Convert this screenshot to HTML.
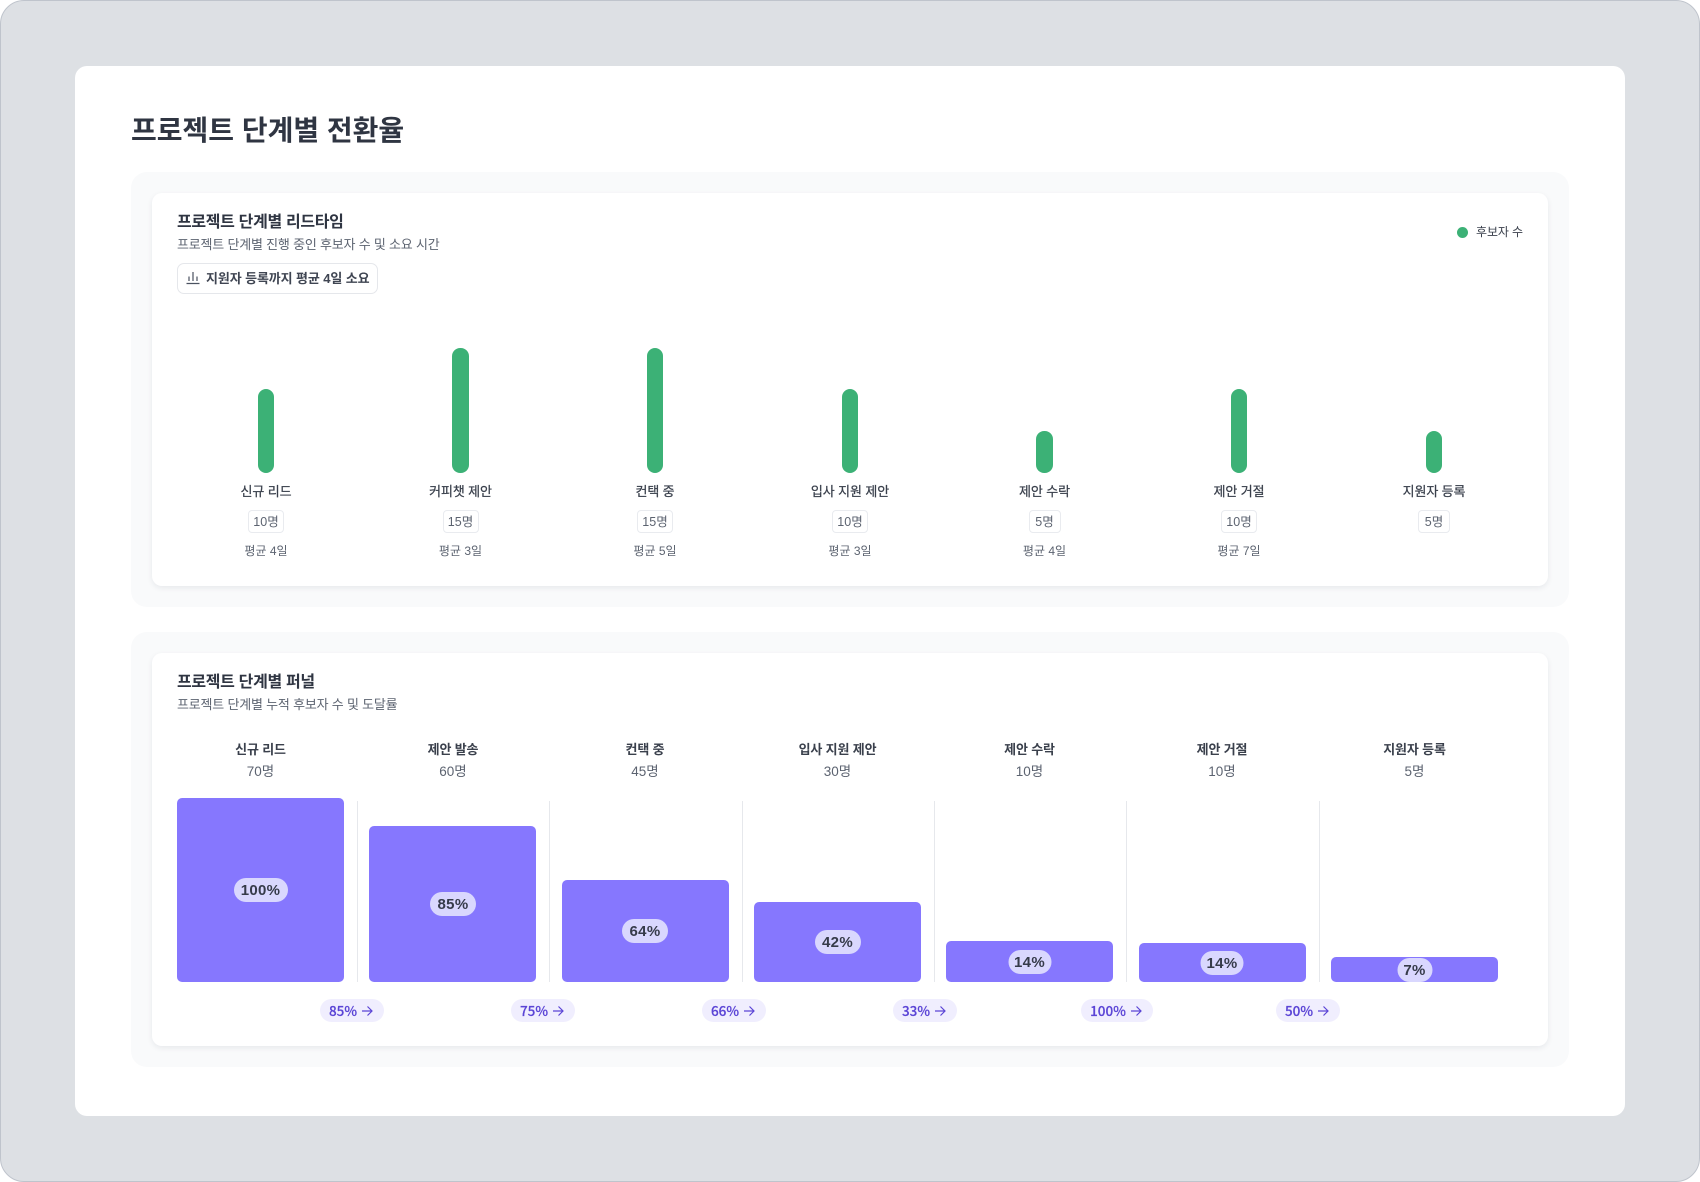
<!DOCTYPE html>
<html lang="ko"><head><meta charset="utf-8"><title>프로젝트 단계별 전환율</title>
<style>
*{box-sizing:border-box}
html,body{margin:0;padding:0;background:#fff}
body{width:1700px;height:1182px;position:relative;overflow:hidden;font-family:"Liberation Sans","Noto Sans CJK KR",sans-serif;color:#2f3542}
.a{position:absolute}
.frame{left:0;top:0;width:1700px;height:1182px;background:#dde0e4;border:1px solid #bfc4cc;border-radius:24px}
.card{left:75px;top:66px;width:1550px;height:1050px;background:#fff;border-radius:12px}
.panel{left:131px;width:1438px;background:#f9fafb;border-radius:16px}
.inner{left:152px;width:1396px;background:#fff;border-radius:10px;box-shadow:0 2px 6px rgba(30,40,60,.08)}
.t{position:absolute;white-space:nowrap;line-height:20px;height:20px}
.c{transform:translateX(-50%);text-align:center}
h1{margin:0;position:absolute;left:131px;top:109px;font-size:28px;line-height:44px;font-weight:700;color:#2f3542;white-space:nowrap}
.h2{font-size:16px;font-weight:700;color:#2f3542;letter-spacing:-.33px}
.sub{font-size:13px;color:#5c6370;letter-spacing:-.2px}
.btn{left:177px;top:263px;width:201px;height:31px;border:1px solid #e5e7eb;border-radius:7px;background:#fff}
.lb{font-size:13px;font-weight:400;color:#3a404c;letter-spacing:-.1px;-webkit-text-stroke:.25px #3a404c}
.fh{font-weight:700;-webkit-text-stroke:0;letter-spacing:-.15px}
.bar{width:16.4px;background:#3cb176;border-radius:8.2px}
.cnt{height:23px;border:1px solid #e9ebef;border-radius:4px;background:#fff;font-size:12.5px;line-height:22px;text-align:center;color:#5c6370;transform:translateX(-50%)}
.av{font-size:12px;color:#5c6370}
.fc{font-size:13.5px}
.f{width:167px;background:#8677fe;border-radius:5px;bottom:200px}
.dv{width:1px;top:801px;height:181px;background:#e6e8ec}
.p{height:24px;background:#d9d7fe;border-radius:12px;font-size:15px;letter-spacing:.3px;font-weight:700;line-height:25px;text-align:center;color:#363b4a;transform:translate(-50%,-50%)}
.r{top:999px;height:23px;background:#f0eefe;border-radius:12px;color:#5b45d6;font-family:"Noto Sans CJK KR","Liberation Sans",sans-serif;font-size:13.5px;font-weight:500;line-height:23px;display:flex;align-items:center;justify-content:center;gap:4px;padding-right:2px;transform:translateX(-50%);-webkit-text-stroke:.2px #5b45d6}
.r svg{display:block}
</style></head><body>
<div class="a frame"></div>
<div class="a card"></div>
<h1>프로젝트 단계별 전환율</h1>

<div class="a panel" style="top:172px;height:435px"></div>
<div class="a inner" style="top:193px;height:393px"></div>
<div class="t h2" style="left:177px;top:212.500px">프로젝트 단계별 리드타임</div>
<div class="t sub" style="left:177px;top:235px">프로젝트 단계별 진행 중인 후보자 수 및 소요 시간</div>
<div class="a btn"></div>
<svg class="a" style="left:186px;top:270px" width="14" height="15" viewBox="0 0 14 15" fill="none" stroke="#4b5260" stroke-width="1.2"><path d="M0.5 13.5H13.5M3 11V6.5M7 11V2M11 11V6.5"/></svg>
<div class="t" style="left:206px;top:269px;font-size:13px;font-weight:700;color:#3f4552;letter-spacing:-.1px">지원자 등록까지 평균 4일 소요</div>
<div class="a" style="left:1456.500px;top:226.500px;width:11px;height:11px;border-radius:50%;background:#3cb176"></div>
<div class="t" style="left:1476px;top:222px;font-size:12px;color:#3a404c;letter-spacing:-.1px">후보자 수</div>

<div class="a bar" style="left:257.800px;top:389px;height:84px"></div>
<div class="a bar" style="left:452.300px;top:348px;height:125px"></div>
<div class="a bar" style="left:647px;top:348px;height:125px"></div>
<div class="a bar" style="left:841.700px;top:389px;height:84px"></div>
<div class="a bar" style="left:1036.300px;top:430.500px;height:42.500px"></div>
<div class="a bar" style="left:1231px;top:389px;height:84px"></div>
<div class="a bar" style="left:1425.800px;top:430.500px;height:42.500px"></div>

<div class="t lb c" style="left:266px;top:482px">신규 리드</div>
<div class="t lb c" style="left:460.5px;top:482px">커피챗 제안</div>
<div class="t lb c" style="left:655px;top:482px">컨택 중</div>
<div class="t lb c" style="left:850px;top:482px">입사 지원 제안</div>
<div class="t lb c" style="left:1044.5px;top:482px">제안 수락</div>
<div class="t lb c" style="left:1239px;top:482px">제안 거절</div>
<div class="t lb c" style="left:1434px;top:482px">지원자 등록</div>

<div class="a cnt" style="left:266px;top:510px;width:36px">10명</div>
<div class="a cnt" style="left:460.5px;top:510px;width:36px">15명</div>
<div class="a cnt" style="left:655px;top:510px;width:36px">15명</div>
<div class="a cnt" style="left:850px;top:510px;width:36px">10명</div>
<div class="a cnt" style="left:1044.5px;top:510px;width:32px">5명</div>
<div class="a cnt" style="left:1239px;top:510px;width:36px">10명</div>
<div class="a cnt" style="left:1434px;top:510px;width:32px">5명</div>

<div class="t av c" style="left:266px;top:541px">평균 4일</div>
<div class="t av c" style="left:460.5px;top:541px">평균 3일</div>
<div class="t av c" style="left:655px;top:541px">평균 5일</div>
<div class="t av c" style="left:850px;top:541px">평균 3일</div>
<div class="t av c" style="left:1044.5px;top:541px">평균 4일</div>
<div class="t av c" style="left:1239px;top:541px">평균 7일</div>

<div class="a panel" style="top:632px;height:435px"></div>
<div class="a inner" style="top:653px;height:393px"></div>
<div class="t h2" style="left:177px;top:672.500px">프로젝트 단계별 퍼널</div>
<div class="t sub" style="left:177px;top:695px">프로젝트 단계별 누적 후보자 수 및 도달률</div>

<div class="t lb fh c" style="left:260.5px;top:739.500px">신규 리드</div>
<div class="t lb fh c" style="left:453px;top:739.500px">제안 발송</div>
<div class="t lb fh c" style="left:645px;top:739.500px">컨택 중</div>
<div class="t lb fh c" style="left:837.5px;top:739.500px">입사 지원 제안</div>
<div class="t lb fh c" style="left:1029.5px;top:739.500px">제안 수락</div>
<div class="t lb fh c" style="left:1222px;top:739.500px">제안 거절</div>
<div class="t lb fh c" style="left:1414.5px;top:739.500px">지원자 등록</div>

<div class="t av fc c" style="left:260.5px;top:762px">70명</div>
<div class="t av fc c" style="left:453px;top:762px">60명</div>
<div class="t av fc c" style="left:645px;top:762px">45명</div>
<div class="t av fc c" style="left:837.5px;top:762px">30명</div>
<div class="t av fc c" style="left:1029.5px;top:762px">10명</div>
<div class="t av fc c" style="left:1222px;top:762px">10명</div>
<div class="t av fc c" style="left:1414.5px;top:762px">5명</div>

<div class="a dv" style="left:357px"></div>
<div class="a dv" style="left:549px"></div>
<div class="a dv" style="left:742px"></div>
<div class="a dv" style="left:934px"></div>
<div class="a dv" style="left:1126px"></div>
<div class="a dv" style="left:1319px"></div>

<div class="a f" style="left:177px;height:184px"></div>
<div class="a f" style="left:369px;height:156px"></div>
<div class="a f" style="left:561.800px;height:102px"></div>
<div class="a f" style="left:754px;height:80px"></div>
<div class="a f" style="left:946px;height:41px"></div>
<div class="a f" style="left:1138.500px;height:39px"></div>
<div class="a f" style="left:1331px;height:25px"></div>

<div class="a p" style="left:260.5px;top:890px;width:54px">100%</div>
<div class="a p" style="left:453px;top:904px;width:46px">85%</div>
<div class="a p" style="left:645px;top:931px;width:46px">64%</div>
<div class="a p" style="left:837.5px;top:942px;width:46px">42%</div>
<div class="a p" style="left:1029.5px;top:961.500px;width:43px">14%</div>
<div class="a p" style="left:1222px;top:962.500px;width:43px">14%</div>
<div class="a p" style="left:1414.5px;top:970px;width:35px">7%</div>

<div class="a r" style="left:352px;width:64px">85%<svg width="12" height="12" viewBox="0 0 12 12" fill="none" stroke="#5b45d6" stroke-width="1.2"><path d="M1 6H11M6.500 1.500L11 6L6.500 10.500"/></svg></div>
<div class="a r" style="left:543px;width:64px">75%<svg width="12" height="12" viewBox="0 0 12 12" fill="none" stroke="#5b45d6" stroke-width="1.2"><path d="M1 6H11M6.500 1.500L11 6L6.500 10.500"/></svg></div>
<div class="a r" style="left:734px;width:64px">66%<svg width="12" height="12" viewBox="0 0 12 12" fill="none" stroke="#5b45d6" stroke-width="1.2"><path d="M1 6H11M6.500 1.500L11 6L6.500 10.500"/></svg></div>
<div class="a r" style="left:925px;width:64px">33%<svg width="12" height="12" viewBox="0 0 12 12" fill="none" stroke="#5b45d6" stroke-width="1.2"><path d="M1 6H11M6.500 1.500L11 6L6.500 10.500"/></svg></div>
<div class="a r" style="left:1117px;width:72px">100%<svg width="12" height="12" viewBox="0 0 12 12" fill="none" stroke="#5b45d6" stroke-width="1.2"><path d="M1 6H11M6.500 1.500L11 6L6.500 10.500"/></svg></div>
<div class="a r" style="left:1308px;width:64px">50%<svg width="12" height="12" viewBox="0 0 12 12" fill="none" stroke="#5b45d6" stroke-width="1.2"><path d="M1 6H11M6.500 1.500L11 6L6.500 10.500"/></svg></div>
</body></html>
